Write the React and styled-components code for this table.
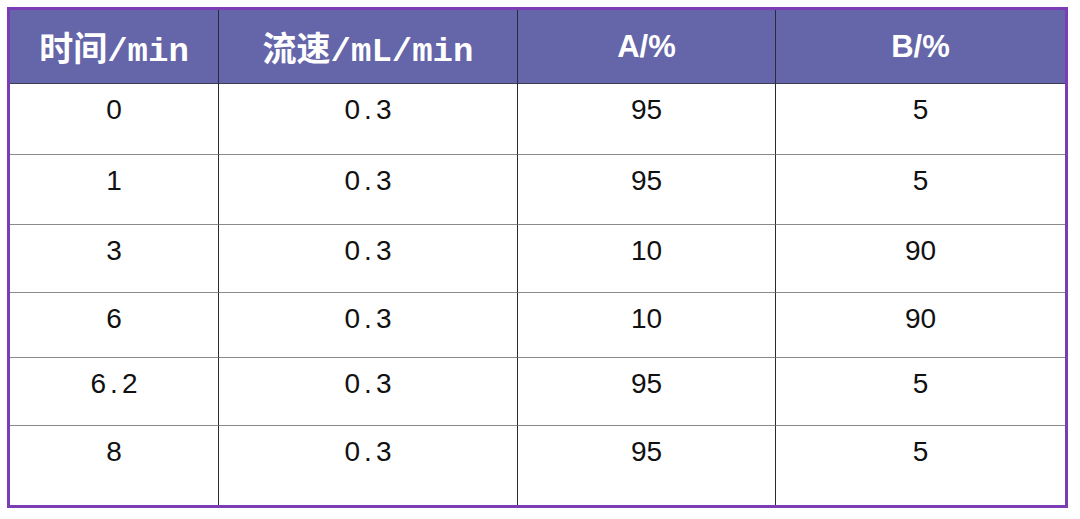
import styled, { createGlobalStyle } from "styled-components";

const GlobalStyle = createGlobalStyle`
  html, body {
    margin: 0;
    padding: 0;
    background: #ffffff;
  }
`;

const columns = ["时间/min", "流速/mL/min", "A/%", "B/%"];

const rows = [
  ["0", "0.3", "95", "5"],
  ["1", "0.3", "95", "5"],
  ["3", "0.3", "10", "90"],
  ["6", "0.3", "10", "90"],
  ["6.2", "0.3", "95", "5"],
  ["8", "0.3", "95", "5"],
];

const Page = styled.div`
  padding: 7px 0 0 7px;
  width: 1080px;
  height: 519px;
  box-sizing: border-box;
`;

const Grid = styled.div`
  display: grid;
  width: 1061px;
  box-sizing: border-box;
  grid-template-columns: 209px 299px 258px 289px;
  grid-template-rows: 74px 71px 70px 68px 65px 68px 79px;
  border: 3px solid #7a3db4;
`;

const HeadCell = styled.div`
  display: flex;
  align-items: center;
  justify-content: center;
  box-sizing: border-box;
  background: #6565a9;
  color: #ffffff;
  border-right: ${(p) => (p.$last ? "none" : "1px solid #2a2a3a")};
  border-bottom: 1px solid #3d3d55;
  font-family: ${(p) =>
    p.$latin
      ? `"Liberation Sans", Arial, sans-serif`
      : `"Liberation Mono", "Noto Sans CJK SC", monospace`};
  font-size: ${(p) => (p.$latin ? "31px" : "34px")};
  font-weight: ${(p) => (p.$latin ? 700 : 600)};
  white-space: nowrap;
`;

const Cell = styled.div`
  box-sizing: border-box;
  text-align: center;
  padding-top: 12px;
  line-height: 28px;
  color: #111111;
  border-right: ${(p) => (p.$last ? "none" : "1px solid #2a2a2a")};
  border-bottom: ${(p) => (p.$bottom ? "none" : "1px solid #8a8a8a")};
  font-family: "Liberation Sans", Arial, sans-serif;
  font-size: 28px;
  letter-spacing: ${(p) => (p.$decimal ? "4px" : "0")};
  text-indent: ${(p) => (p.$decimal ? "4px" : "0")};
`;

export default function App() {
  return (
    <Page>
      <GlobalStyle />
      <Grid>
        {columns.map((c, i) => (
          <HeadCell key={c} $last={i === 3} $latin={i >= 2}>
            {c}
          </HeadCell>
        ))}
        {rows.map((r, ri) =>
          r.map((v, ci) => (
            <Cell
              key={`${ri}-${ci}`}
              $last={ci === 3}
              $bottom={ri === rows.length - 1}
              $decimal={v.includes(".")}
            >
              {v}
            </Cell>
          ))
        )}
      </Grid>
    </Page>
  );
}
